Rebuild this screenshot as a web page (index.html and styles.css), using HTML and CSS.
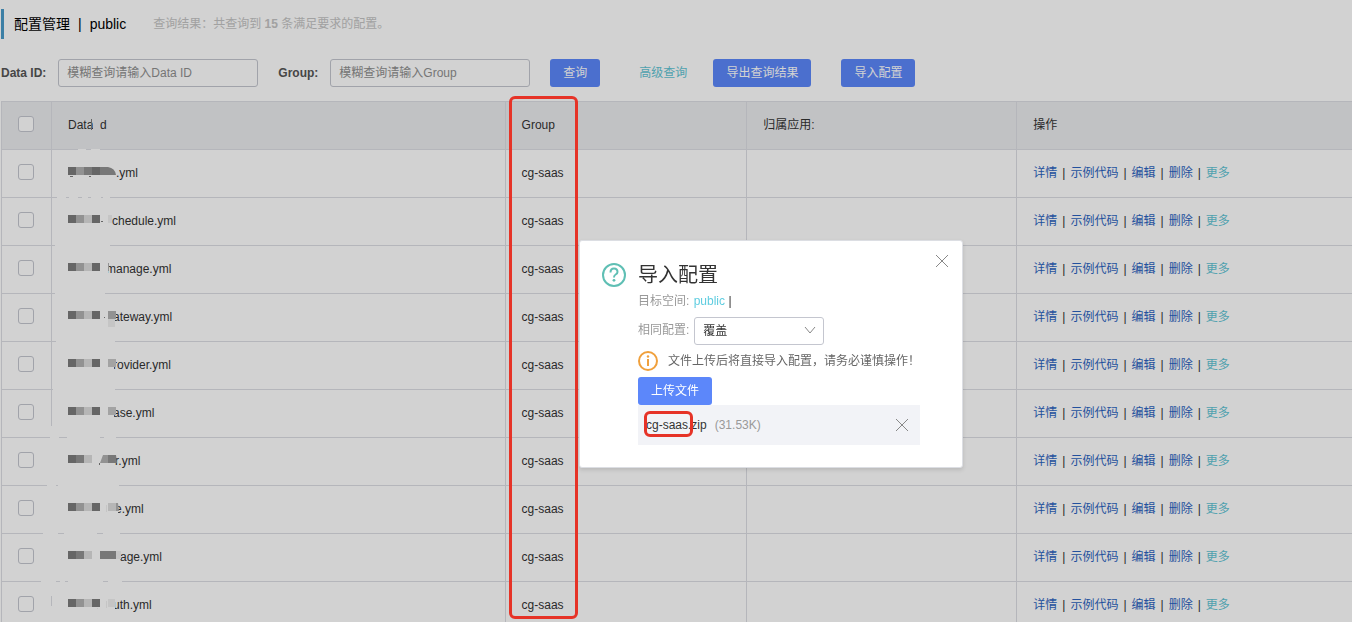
FILE: index.html
```html
<!DOCTYPE html>
<html lang="zh-CN">
<head>
	<meta charset="utf-8">
	<title>配置管理</title>
	<meta name="viewport" content="width=device-width, initial-scale=1.0" />
	<link rel="stylesheet" href="styles.css">
</head>
<body>
	<main>
		<header class="title-bar">
			<h1>配置管理<span class="sep">|</span>public</h1>
			<p class="result">查询结果：共查询到 <b>15</b> 条满足要求的配置。</p>
		</header>
		<form class="search">
			<label for="data-id">Data ID:</label>
			<input id="data-id" type="text" placeholder="模糊查询请输入Data ID">
			<label for="group" class="group-label">Group:</label>
			<input id="group" type="text" placeholder="模糊查询请输入Group">
			<button type="button" class="button query">查询</button>
			<a href="#" class="advanced">高级查询</a>
			<button type="button" class="button export">导出查询结果</button>
			<button type="button" class="button">导入配置</button>
		</form>
		<table>
			<colgroup>
				<col class="col-check"><col class="col-id"><col class="col-group"><col class="col-app"><col>
			</colgroup>
			<thead>
				<tr>
					<th><input type="checkbox" aria-label="全选"></th>
					<th><div class="data-id"><span>Data Id</span><svg class="mosaic head" width="39" height="15"><path class="erase-head" d="M25 0h7v15h-7z"/><path class="erase" d="M10 31h8v1h-8zM23 31h9v1h-9z"/><path class="b1" d="M23 1h1v11h-1z"/></svg></div></th>
					<th>Group</th>
					<th>归属应用:</th>
					<th>操作</th>
				</tr>
			</thead>
			<tbody>
				<tr>
					<td><input type="checkbox" aria-label="选择"></td>
					<td><div class="data-id"><svg class="mosaic" width="48" height="15"><path class="erase" d="M-11 31h9v1h-9zM1 31h9v1H1zM14 31h6v1h-6zM23 31h10v1H23zM35 31h7v1h-7z"/><path class="b1" d="M0 1h8v8H0zM24 1h8v8h-8zM2 10h3v1H2zM21 10h2v1h-2z"/><path class="b2" d="M8 1h8v8H8z"/><path class="b4" d="M16 1h8v8h-8zM32 1h8v8h-8zM40 1q7 1 8 8h-8z"/></svg>.yml</div></td>
					<td>cg-saas</td>
					<td></td>
					<td class="actions"><a href="#">详情</a><span>|</span><a href="#">示例代码</a><span>|</span><a href="#">编辑</a><span>|</span><a href="#">删除</a><span>|</span><a href="#" class="more">更多</a></td>
				</tr>
				<tr>
					<td><input type="checkbox" aria-label="选择"></td>
					<td><div class="data-id"><svg class="mosaic" width="44" height="15"><path class="erase" d="M-13 31h55v1h-55z"/><path class="b1" d="M0 1h8v8H0zM24 1h8v8h-8zM33 7h2v1h-2z"/><path class="b2" d="M8 1h8v8H8z"/><path class="b3" d="M16 1h8v8h-8z"/><path class="b5" d="M40 1h4v8h-4z"/></svg>chedule.yml</div></td>
					<td>cg-saas</td>
					<td></td>
					<td class="actions"><a href="#">详情</a><span>|</span><a href="#">示例代码</a><span>|</span><a href="#">编辑</a><span>|</span><a href="#">删除</a><span>|</span><a href="#" class="more">更多</a></td>
				</tr>
				<tr>
					<td><input type="checkbox" aria-label="选择"></td>
					<td><div class="data-id"><svg class="mosaic" width="38" height="15"><path class="erase" d="M-13 31h50v1h-50zM36 0h4v15h-4z"/><path class="b1" d="M0 1h8v8H0zM24 1h8v8h-8z"/><path class="b2" d="M8 1h8v8H8zM40 1h1v8h-1z"/><path class="b3" d="M16 1h8v8h-8z"/></svg>manage.yml</div></td>
					<td>cg-saas</td>
					<td></td>
					<td class="actions"><a href="#">详情</a><span>|</span><a href="#">示例代码</a><span>|</span><a href="#">编辑</a><span>|</span><a href="#">删除</a><span>|</span><a href="#" class="more">更多</a></td>
				</tr>
				<tr>
					<td><input type="checkbox" aria-label="选择"></td>
					<td><div class="data-id"><svg class="mosaic" width="45" height="15"><path class="erase" d="M-12 31h59v1h-59zM45 0h2v15h-2z"/><path class="b1" d="M0 1h8v8H0zM24 1h8v8h-8zM36 7h1v1h-1z"/><path class="b2" d="M8 1h8v8H8zM40 1h8v8h-8z"/><path class="b3" d="M16 1h8v8h-8z"/><path class="b5" d="M40 9h7v8h-7z"/></svg>ateway.yml</div></td>
					<td>cg-saas</td>
					<td></td>
					<td class="actions"><a href="#">详情</a><span>|</span><a href="#">示例代码</a><span>|</span><a href="#">编辑</a><span>|</span><a href="#">删除</a><span>|</span><a href="#" class="more">更多</a></td>
				</tr>
				<tr>
					<td><input type="checkbox" aria-label="选择"></td>
					<td><div class="data-id"><svg class="mosaic" width="45" height="15"><path class="erase" d="M-15 31h62v1h-62zM45 0h1v15h-1z"/><path class="b1" d="M0 1h8v8H0zM24 1h8v8h-8z"/><path class="b2" d="M8 1h8v8H8z"/><path class="b3" d="M16 1h8v8h-8z"/><path class="b6" d="M40 1h8v8h-8z"/></svg>rovider.yml</div></td>
					<td>cg-saas</td>
					<td></td>
					<td class="actions"><a href="#">详情</a><span>|</span><a href="#">示例代码</a><span>|</span><a href="#">编辑</a><span>|</span><a href="#">删除</a><span>|</span><a href="#" class="more">更多</a></td>
				</tr>
				<tr>
					<td><input type="checkbox" aria-label="选择"></td>
					<td><div class="data-id"><svg class="mosaic" width="45" height="15"><path class="erase" d="M-18 31h9v1h-9zM-1 31h33v1H-1zM36 31h12v1H36zM-17 20h1v12h-1zM45 0h1v15h-1z"/><path class="b1" d="M0 1h8v8H0zM24 1h8v8h-8z"/><path class="b2" d="M8 1h8v8H8z"/><path class="b3" d="M16 1h8v8h-8z"/><path class="b6" d="M40 1h8v8h-8z"/></svg>ase.yml</div></td>
					<td>cg-saas</td>
					<td></td>
					<td class="actions"><a href="#">详情</a><span>|</span><a href="#">示例代码</a><span>|</span><a href="#">编辑</a><span>|</span><a href="#">删除</a><span>|</span><a href="#" class="more">更多</a></td>
				</tr>
				<tr>
					<td><input type="checkbox" aria-label="选择"></td>
					<td><div class="data-id"><svg class="mosaic" width="47" height="15"><path class="erase" d="M-21 31h9v1h-9zM-10 31h61v1h-61zM-17-16h1v48h-1z"/><path class="b1" d="M0 1h8v8H0zM31 9h1v2h-1z"/><path class="b4" d="M8 1h8v8H8zM40 1h8l1 8h-9z"/><path class="b3" d="M16 1h8v8h-8z"/><path class="b2" d="M35 1h5v8h-8z"/></svg>r.yml</div></td>
					<td>cg-saas</td>
					<td></td>
					<td class="actions"><a href="#">详情</a><span>|</span><a href="#">示例代码</a><span>|</span><a href="#">编辑</a><span>|</span><a href="#">删除</a><span>|</span><a href="#" class="more">更多</a></td>
				</tr>
				<tr>
					<td><input type="checkbox" aria-label="选择"></td>
					<td><div class="data-id"><svg class="mosaic" width="47" height="15"><path class="erase" d="M-25 31h15v1h-15zM-4 31h33v1H-4zM35 31h17v1H35zM-17-16h1v48h-1zM46 0h4v15h-4z"/><path class="b1" d="M0 1h8v8H0zM24 1h8v8h-8z"/><path class="b2" d="M8 1h8v8H8zM48 1h2l1 8h-3z"/><path class="b3" d="M16 1h8v8h-8zM40 1h8v8h-8z"/><path class="b5" d="M38 3h1v7h-1z"/></svg>e.yml</div></td>
					<td>cg-saas</td>
					<td></td>
					<td class="actions"><a href="#">详情</a><span>|</span><a href="#">示例代码</a><span>|</span><a href="#">编辑</a><span>|</span><a href="#">删除</a><span>|</span><a href="#" class="more">更多</a></td>
				</tr>
				<tr>
					<td><input type="checkbox" aria-label="选择"></td>
					<td><div class="data-id"><svg class="mosaic" width="52" height="15"><path class="erase" d="M-27 31h15v1h-15zM-8 31h5v1h-5zM0 31h35v1H0zM40 31h14v1H40zM-17-16h1v48h-1z"/><path class="b1" d="M0 1h8v8H0z"/><path class="b4" d="M8 1h8v8H8zM32 1h16v8H32z"/><path class="b3" d="M16 1h8v8h-8z"/><path class="b5" d="M48 1h5v8h-5z"/></svg>age.yml</div></td>
					<td>cg-saas</td>
					<td></td>
					<td class="actions"><a href="#">详情</a><span>|</span><a href="#">示例代码</a><span>|</span><a href="#">编辑</a><span>|</span><a href="#">删除</a><span>|</span><a href="#" class="more">更多</a></td>
				</tr>
				<tr>
					<td><input type="checkbox" aria-label="选择"></td>
					<td><div class="data-id"><svg class="mosaic" width="45" height="15"><path class="erase" d="M-17-16h1v14h-1zM-17 8h1v24h-1zM45 0h2v15h-2z"/><path class="b1" d="M0 1h8v8H0zM24 1h8v8h-8z"/><path class="b2" d="M8 1h8v8H8z"/><path class="b3" d="M16 1h8v8h-8z"/><path class="b5" d="M40 1h7v8h-7zM38 3h1v7h-1zM29 10h1v1h-1z"/></svg>uth.yml</div></td>
					<td>cg-saas</td>
					<td></td>
					<td class="actions"><a href="#">详情</a><span>|</span><a href="#">示例代码</a><span>|</span><a href="#">编辑</a><span>|</span><a href="#">删除</a><span>|</span><a href="#" class="more">更多</a></td>
				</tr>
			</tbody>
		</table>
	</main>
	<div class="overlay"></div>
	<div class="mark mark-group"></div>
	<div class="dialog" role="dialog" aria-labelledby="dialog-title">
		<button type="button" class="icon-button close" aria-label="关闭"><svg width="12" height="12" viewBox="0 0 12 12"><path d="M0 0l12 12M12 0L0 12"/></svg></button>
		<svg class="help" width="24" height="24" viewBox="0 0 24 24"><circle cx="12" cy="12" r="11"/><path d="M8.500 9.500q0-4 3.500-4t3.500 3.500q0 1.500-1.800 2.500T12 14.500"/><circle class="dot" cx="12" cy="17.300" r="1.400"/></svg>
		<div class="dialog-body">
			<h2 id="dialog-title">导入配置</h2>
			<p class="target">目标空间: <a href="#">public</a> <span>|</span></p>
			<div class="policy">
				<label for="policy">相同配置:</label>
				<div class="select">
					<select id="policy"><option>覆盖</option></select>
					<svg width="12" height="8" viewBox="0 0 12 8"><path d="M1 1l5 6 5-6"/></svg>
				</div>
			</div>
			<p class="warning">
				<svg width="20" height="20" viewBox="0 0 20 20"><circle cx="10" cy="10" r="9"/><path d="M10 8v7"/><circle class="dot" cx="10" cy="5.500" r="1.200"/></svg>
				文件上传后将直接导入配置，请务必谨慎操作！
			</p>
			<button type="button" class="button">上传文件</button>
			<div class="file">
				<span class="file-name">cg-saas.zip</span>
				<span class="file-size">(31.53K)</span>
				<button type="button" class="icon-button" aria-label="删除文件"><svg width="12" height="12" viewBox="0 0 12 12"><path d="M0 0l12 12M12 0L0 12"/></svg></button>
				<div class="mark mark-file"></div>
			</div>
		</div>
	</div>
</body>
</html>
```
FILE: styles.css
```css
* {
	box-sizing: border-box;
}
html {
	height: 100%;
	overflow: hidden;
}
body {
	position: relative;
	min-height: 100%;
	margin: 0;
	font: 12px/18px "Liberation Sans", "Noto Sans CJK SC", sans-serif;
	color: #333;
	background: #fff;
}
h1, h2, p {
	margin: 0;
	font-weight: normal;
}
a {
	color: #2b63c0;
	text-decoration: none;
}
button, input, select {
	font: inherit;
}
main {
	padding: 9px 0 0 1px;
}
.title-bar {
	display: flex;
	align-items: center;
	gap: 27px;
	height: 30px;
	padding-left: 10px;
	border-left: 3px solid #4a9bc9;
}
.title-bar h1 {
	font-size: 14px;
	color: #000;
}
.sep {
	margin: 0 8px;
}
.result {
	color: #c4c4c4;
}
.search {
	display: flex;
	align-items: center;
	margin: 20px 0 14px;
	white-space: nowrap;
}
.search label {
	margin-right: 12px;
	font-weight: bold;
	color: #555;
}
.search .group-label {
	margin-left: 20px;
}
.search input {
	width: 200px;
	height: 28px;
	padding: 0 8px;
	border: 1px solid #c4c6cf;
	border-radius: 3px;
	background: #fff;
}
.search input::placeholder {
	color: #8f8f8f;
	opacity: 1;
}
.button {
	height: 28px;
	padding: 0 13px;
	border: 0;
	border-radius: 3px;
	background: #5c87fa;
	color: #fff;
}
.search .query {
	margin: 0 39px 0 20px;
}
.search .export {
	margin: 0 30px 0 26px;
}
.advanced, .more {
	color: #5fc4d4;
}
table {
	width: 100%;
	table-layout: fixed;
	border-spacing: 0;
	border-top: 1px solid #dcdee3;
	border-left: 1px solid #dcdee3;
}
.col-check {
	width: 50px;
}
.col-id {
	width: 33.6%;
}
.col-group {
	width: 17.9%;
}
.col-app {
	width: 20%;
}
th, td {
	height: 48px;
	padding: 0 16px 2px;
	border-right: 1px solid #dcdee3;
	border-bottom: 1px solid #dcdee3;
	font-weight: normal;
	text-align: left;
	white-space: nowrap;
}
th {
	background: #ebecef;
}
th:first-child, td:first-child {
	padding-bottom: 4px;
}
th:last-child, td:last-child {
	border-right: 0;
}
input[type="checkbox"] {
	display: block;
	appearance: none;
	width: 16px;
	height: 16px;
	margin: 0;
	border: 1px solid #c4c6cf;
	border-radius: 3px;
	background: #fff;
}
.actions span {
	margin: 0 5px;
}

/* blurred part of the file names */
.data-id {
	display: flex;
	align-items: center;
	height: 45px;
}
.mosaic {
	position: relative;
	margin-top: 2px;
	overflow: visible;
}
.mosaic.head {
	margin-left: -39px;
}
.erase { fill: #fff; }
.erase-head { fill: #ebecef; }
.b1 { fill: #7c7c7c; }
.b2 { fill: #b2b2b2; }
.b3 { fill: #dedede; }
.b4 { fill: #929292; }
.b5 { fill: #f0f0f0; }
.b6 { fill: #c6c6c6; }

.overlay {
	position: fixed;
	inset: 0;
	background: rgba(0, 0, 0, .175);
}
.mark {
	position: absolute;
	border: 3px solid #e63327;
	border-radius: 6px;
	pointer-events: none;
}
.mark-group {
	top: 96px;
	left: 509px;
	width: 69px;
	height: 523px;
}
.dialog {
	position: absolute;
	top: 240px;
	left: 579px;
	display: flex;
	gap: 12px;
	width: 384px;
	padding: 22px 42px 22px 22px;
	border: 1px solid #dcdee3;
	border-radius: 3px;
	background: #fff;
	box-shadow: 0 2px 4px rgba(0, 0, 0, .12);
}
.dialog svg {
	flex: none;
	fill: none;
	stroke: #888;
}
.dialog .help {
	stroke: #5fbfb4;
	stroke-width: 2;
}
.dialog .help .dot {
	fill: #5fbfb4;
	stroke: none;
}
.dialog-body {
	flex: 1;
}
.dialog h2 {
	font-size: 20px;
	line-height: 24px;
}
.icon-button {
	display: flex;
	padding: 0;
	border: 0;
	background: none;
}
.icon-button svg {
	overflow: visible;
}
.close {
	position: absolute;
	top: 14px;
	right: 14px;
}
.target {
	margin: 5px 0 7px;
	color: #999;
}
.target a {
	margin-left: 1px;
	color: #5fcde0;
}
.target span {
	color: #333;
}
.policy {
	display: flex;
	gap: 5px;
	color: #999;
}
.policy label {
	line-height: 26px;
}
.select {
	position: relative;
	width: 130px;
}
.select select {
	display: block;
	appearance: none;
	width: 100%;
	height: 28px;
	padding: 0 8px;
	border: 1px solid #c4c6cf;
	border-radius: 3px;
	background: #fff;
	color: #333;
}
.select svg {
	position: absolute;
	top: 9px;
	right: 8px;
	pointer-events: none;
}
.warning {
	display: flex;
	align-items: center;
	gap: 10px;
	height: 32px;
	color: #666;
	white-space: nowrap;
}
.warning svg {
	stroke: #f0a03c;
	stroke-width: 2;
}
.warning .dot {
	fill: #f0a03c;
	stroke: none;
}
.file {
	position: relative;
	display: flex;
	align-items: center;
	height: 40px;
	padding: 0 12px 0 8px;
	background: #f2f3f7;
}
.file-size {
	flex: 1;
	margin-left: 8px;
	color: #999;
}
.mark-file {
	top: 6px;
	left: 6px;
	width: 49px;
	height: 26px;
}
```
